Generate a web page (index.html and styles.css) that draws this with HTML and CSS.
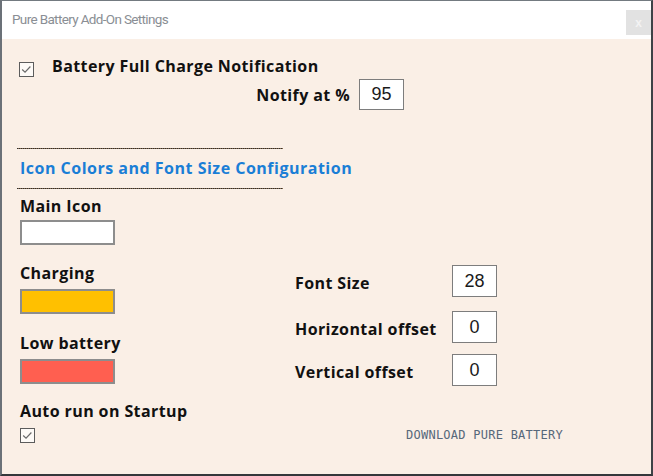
FILE: index.html
```html
<!DOCTYPE html>
<html>
<head>
<meta charset="utf-8">
<link rel="stylesheet" href="styles.css">
</head>
<body>
<div class="window">
  <div class="titlebar">
    <span class="title">Pure Battery Add-On Settings</span>
    <span class="close">x</span>
  </div>
  <div class="content">
    <div class="top">
      <div class="check-row">
        <span class="checkbox"><svg viewBox="0 0 15 15" width="13" height="13"><path d="M2.5 7.5 L5.8 10.5 L12 4" fill="none" stroke="#6a6a6a" stroke-width="1.4"/></svg></span>
        <span class="label">Battery Full Charge Notification</span>
      </div>
      <div class="notify-row">
        <span class="label">Notify at %</span>
        <span class="numbox">95</span>
      </div>
    </div>
    <div class="rule"></div>
    <div class="section-title">Icon Colors and Font Size Configuration</div>
    <div class="rule rule2"></div>
    <div class="columns">
      <div class="left">
        <div class="label">Main Icon</div>
        <div class="swatch swatch-white"></div>
        <div class="label l2">Charging</div>
        <div class="swatch swatch-orange s2"></div>
        <div class="label l3">Low battery</div>
        <div class="swatch swatch-red s3"></div>
        <div class="label l4">Auto run on Startup</div>
        <span class="checkbox cb2"><svg viewBox="0 0 15 15" width="13" height="13"><path d="M2.5 7.5 L5.8 10.5 L12 4" fill="none" stroke="#6a6a6a" stroke-width="1.4"/></svg></span>
      </div>
      <div class="right">
        <div class="field">
          <span class="label flabel">Font Size</span>
          <span class="numbox nb">28</span>
        </div>
        <div class="field f2">
          <span class="label flabel">Horizontal offset</span>
          <span class="numbox nb">0</span>
        </div>
        <div class="field f3">
          <span class="label flabel">Vertical offset</span>
          <span class="numbox nb">0</span>
        </div>
        <div class="download">DOWNLOAD PURE BATTERY</div>
      </div>
    </div>
  </div>
</div>
</body>
</html>
```
FILE: styles.css
```css
html, body {
  margin: 0;
  padding: 0;
  background: #3c4046;
}
.window {
  width: 653px;
  height: 476px;
  box-sizing: border-box;
  border-style: solid;
  border-width: 1px 2px 2px 2px;
  border-color: #737a80 #3e4247 #34373b #6b7178;
  display: flex;
  flex-direction: column;
}
.titlebar {
  height: 38px;
  flex: none;
  background: #ffffff;
  display: flex;
  justify-content: space-between;
  align-items: flex-start;
}
.title {
  font-family: Roboto, sans-serif;
  font-size: 13.5px;
  color: #8a8e94;
  margin-left: 10px;
  margin-top: 10px;
  letter-spacing: -0.65px;
}
.close {
  width: 25px;
  height: 25px;
  margin-top: 9px;
  background: #e2e2e2;
  color: #f3f3f3;
  font-family: "Liberation Sans", sans-serif;
  font-size: 12px;
  font-weight: bold;
  display: flex;
  align-items: center;
  justify-content: center;
}
.content {
  flex: 1;
  background: #faefe6;
  padding: 17px 0 0 17px;
}
.label {
  font-family: "Open Sans", sans-serif;
  font-weight: bold;
  font-size: 16px;
  letter-spacing: 0.4px;
  line-height: 20px;
  color: #111111;
}
.top {
  width: 385px;
}
.check-row {
  display: flex;
  align-items: flex-start;
  gap: 18px;
}
.checkbox {
  width: 15px;
  height: 15px;
  box-sizing: border-box;
  border: 1px solid #5c5c5c;
  background: #fdfaf7;
  display: flex;
  align-items: center;
  justify-content: center;
  margin-top: 6px;
  flex: none;
}
.notify-row {
  display: flex;
  justify-content: flex-end;
  align-items: center;
  gap: 9px;
  margin-top: 2px;
}
.numbox {
  width: 45px;
  height: 31px;
  box-sizing: border-box;
  border: 1px solid #7d7d7d;
  background: #ffffff;
  font-family: "Liberation Sans", sans-serif;
  font-size: 18px;
  color: #1a1a1a;
  display: flex;
  align-items: center;
  justify-content: center;
}
.rule {
  width: 266px;
  height: 1px;
  margin-left: -2px;
  margin-top: 38px;
  background: repeating-linear-gradient(90deg, #2e2e2e 0 1px, #84684c 1px 2px);
}
.rule2 {
  margin-top: 10px;
}
.section-title {
  font-family: "Open Sans", sans-serif;
  font-weight: bold;
  font-size: 16px;
  letter-spacing: 0.5px;
  line-height: 20px;
  color: #1a7ed6;
  margin-top: 9px;
  margin-left: 1px;
}
.columns {
  display: grid;
  grid-template-columns: 276px 1fr;
  margin-top: 7px;
}
.left {
  padding-left: 1px;
}
.swatch {
  width: 95px;
  height: 25px;
  box-sizing: border-box;
  border: 2px solid #8d8d8d;
  margin-top: 4px;
}
.swatch-white { background: #ffffff; }
.swatch-orange { background: #ffc000; }
.swatch-red { background: #ff5f50; }
.l2 { margin-top: 18px; }
.s2 { margin-top: 6px; }
.l3 { margin-top: 19px; }
.s3 { margin-top: 6px; }
.l4 { margin-top: 17px; }
.cb2 { margin-top: 7px; }
.right {
  padding-top: 69px;
}
.field {
  display: flex;
  align-items: center;
}
.flabel {
  width: 157px;
  padding-top: 4px;
}
.nb {
  height: 32px;
}
.f2 { margin-top: 14px; }
.f3 { margin-top: 11px; }
.download {
  margin-top: 42px;
  margin-left: 111px;
  font-family: "DejaVu Sans Mono", monospace;
  font-size: 12px;
  letter-spacing: 0.25px;
  color: #56687a;
}
```
